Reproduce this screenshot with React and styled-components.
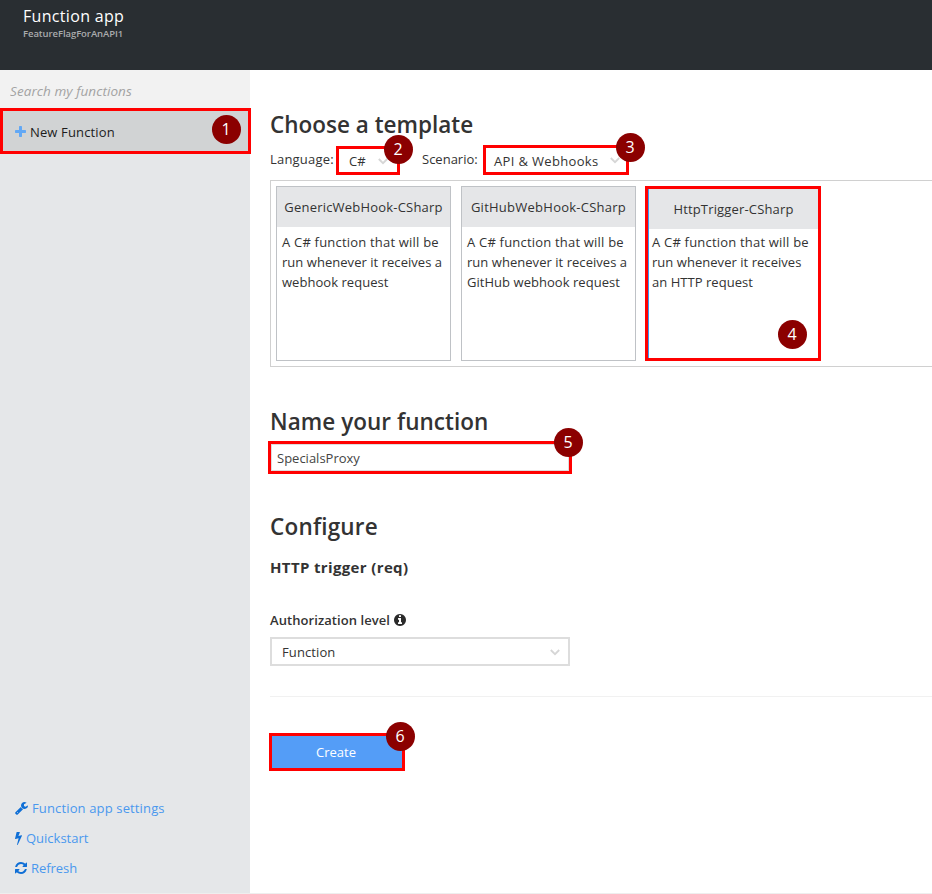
import React from 'react';
import styled, { createGlobalStyle, css } from 'styled-components';

const GlobalStyle = createGlobalStyle`
  *, *::before, *::after { box-sizing: border-box; }
  body { margin: 0; background: #fff; overflow: hidden; }
  h1, h2, h3, p { margin: 0; }
  button, input { font: inherit; }
`;

const marked = css`
  position: relative;
  border: 3px solid #ff0000;
`;

const Page = styled.div`
  display: flex;
  flex-direction: column;
  width: 932px;
  height: 894px;
  border-bottom: 1px solid #eeeeee;
  background: #fff;
  color: #333333;
  font: 13px/20px "Open Sans", "Noto Sans", sans-serif;
  white-space: nowrap;
`;

const Header = styled.header`
  flex: none;
  height: 70px;
  padding: 5px 0 0 23px;
  background: #292e32;
`;

const AppTitle = styled.h1`
  color: #fff;
  font-size: 16px;
  font-weight: 400;
  line-height: 22px;
  letter-spacing: 0.32px;
`;

const AppName = styled.div`
  color: #a9abad;
  font-size: 9.5px;
  font-weight: 600;
  line-height: 13px;
  letter-spacing: -0.07px;
`;

const Body = styled.div`
  display: flex;
  flex: 1;
  min-height: 0;
`;

const Sidebar = styled.nav`
  display: flex;
  flex-direction: column;
  flex: none;
  width: 250px;
  background: #e5e7e9;
`;

const Search = styled.input`
  height: 38px;
  padding: 4px 10px 0;
  border: 0;
  outline: 0;
  background: #f2f2f2;
  font-size: 13.5px;
  font-style: italic;
  letter-spacing: 0.08px;
  &::placeholder { color: #a3a3a3; opacity: 1; }
`;

const NewFunction = styled.div`
  ${marked}
  display: flex;
  align-items: center;
  gap: 4px;
  width: 251px;
  height: 46px;
  padding: 1px 0 0 12px;
  background: #d1d3d4;
  color: #1c1c1c;
  letter-spacing: 0.14px;
`;

const SideLinks = styled.div`
  display: flex;
  flex-direction: column;
  gap: 10px;
  margin: auto 0 15px 15px;
`;

const SideLink = styled.a`
  display: flex;
  align-items: center;
  gap: ${(p) => p.$gap}px;
  height: 20px;
  color: #4a98ee;
  letter-spacing: ${(p) => p.$track || 0}px;
`;

const Glyph = styled.svg`
  flex: none;
  width: ${(p) => p.$w}px;
  height: ${(p) => p.$h}px;
  fill: ${(p) => p.$color};
`;

const Main = styled.main`
  flex: 1;
  min-width: 0;
  padding: 38px 0 0 20px;
`;

const Heading = styled.h2`
  color: #333;
  font-size: 22.5px;
  font-weight: 600;
  line-height: 34px;
  letter-spacing: ${(p) => p.$track || 0}px;
`;

const Filters = styled.div`
  display: flex;
  align-items: flex-start;
  height: 38px;
`;

const FilterLabel = styled.span`
  padding-top: 7px;
  width: ${(p) => p.$w}px;
  letter-spacing: ${(p) => p.$track || 0}px;
`;

const FilterSelect = styled.div`
  ${marked}
  display: flex;
  align-items: center;
  justify-content: space-between;
  width: ${(p) => p.$w}px;
  height: ${(p) => p.$h}px;
  margin: ${(p) => 33 - p.$h}px ${(p) => p.$after || 0}px 0 0;
  padding: 1px ${(p) => p.$right}px 0 ${(p) => p.$left}px;
  letter-spacing: ${(p) => p.$track || 0}px;
`;

const Chevron = styled.svg`
  flex: none;
  width: 10px;
  height: 7px;
  fill: none;
  stroke: #d6d6d6;
  stroke-width: 1.8;
`;

const Templates = styled.section`
  display: flex;
  height: 187px;
  padding: 5px;
  border: 1px solid #d0d0d0;
  border-right: 0;
`;

const Card = styled.article`
  display: flex;
  flex-direction: column;
  width: 175px;
  height: 175px;
  margin-right: 10px;
  border: 1px solid #bfc2c6;
  ${(p) => p.$selected && css`
    ${marked}
    width: 176px;
    margin-left: -1px;
  `}
`;

const CardTitle = styled.h3`
  flex: none;
  height: 40px;
  background: #e5e6e8;
  font-size: 13px;
  font-weight: 400;
  line-height: 41px;
  text-align: center;
  letter-spacing: ${(p) => p.$track}px;
  ${(p) => p.$selected && css`
    border-left: 1px solid #3d96f5;
  `}
`;

const CardText = styled.p`
  flex: 1;
  padding: ${(p) => (p.$selected ? '3px 0 0 3px' : '5px 0 0 5px')};
  letter-spacing: 0.04px;
  ${(p) => p.$selected && css`border-left: 1px solid #3d96f5;`}
  &::first-line { letter-spacing: 0.2px; }
`;

const NameSection = styled.section`
  padding-top: 38px;
`;

const NameBox = styled.div`
  ${marked}
  width: 304px;
  height: 33px;
  margin: 2px 0 0 -2px;
`;

const NameInput = styled.input`
  display: block;
  width: 298px;
  height: 27px;
  padding: 1px 5px 0;
  border: 1px solid #dddddd;
  outline: 0;
  color: #444;
`;

const Configure = styled.section`
  height: 187px;
  margin-top: 36px;
  border-bottom: 1px solid #f1f1f1;
`;

const TriggerName = styled.h3`
  margin-top: 12px;
  font-size: 15px;
  font-weight: 700;
  line-height: 22px;
  letter-spacing: 0.36px;
`;

const FieldLabel = styled.div`
  display: flex;
  align-items: center;
  gap: 4px;
  margin-top: 32px;
  height: 20px;
  font-weight: 600;
  letter-spacing: 0.07px;
`;

const LevelSelect = styled.div`
  display: flex;
  align-items: center;
  justify-content: space-between;
  width: 300px;
  height: 29px;
  margin-top: 7px;
  padding: 1px 8px 0 10px;
  border: 2px solid #dddddd;
  letter-spacing: 0.1px;
`;

const CreateButton = styled.button`
  ${marked}
  display: block;
  width: 136px;
  height: 38px;
  margin: 36px 0 0 -1px;
  padding: 0 2px 0 0;
  background: #549df7;
  color: #fff;
`;

const Badge = styled.span`
  position: absolute;
  top: ${(p) => p.$top}px;
  left: ${(p) => p.$left}px;
  z-index: 1;
  display: flex;
  align-items: center;
  justify-content: center;
  width: 29.6px;
  height: 29.6px;
  padding: 0 1px 1px 0;
  border-radius: 50%;
  background: #8b0000;
  color: #fff;
  font-size: 16px;
  font-weight: 500;
  line-height: 20px;
  letter-spacing: 0;
`;

const icons = {
  plus: 'M1600 736v192q0 40-28 68t-68 28h-416v416q0 40-28 68t-68 28h-192q-40 0-68-28t-28-68v-416h-416q-40 0-68-28t-28-68v-192q0-40 28-68t68-28h416v-416q0-40 28-68t68-28h192q40 0 68 28t28 68v416h416q40 0 68 28t28 68z',
  wrench: 'M448 1472q0-26-19-45t-45-19-45 19-19 45 19 45 45 19 45-19 19-45zm644-420l-682 682q-37 37-90 37-52 0-91-37l-106-108q-38-36-38-90 0-53 38-91l681-681q39 98 114.5 173.5t173.5 114.5zm634-435q0 39-23 106-47 134-164.5 217.5t-258.5 83.5q-185 0-316.5-131.5t-131.5-316.5 131.5-316.5 316.5-131.5q58 0 121.5 16.5t107.5 46.5q16 11 16 28t-16 28l-293 169v224l193 107q5-3 79-48.5t135.5-81 70.5-35.5q15 0 23.5 10t8.5 25z',
  bolt: 'M1333 566q18 20 7 44l-540 1157q-13 25-42 25-4 0-14-2-17-5-25.5-19t-4.5-30l197-808-406 101q-4 1-12 1-18 0-31-11-18-15-13-39l201-825q4-14 16-23t28-9h328q19 0 32 12.5t13 29.5q0 8-5 18l-171 463 396-98q8-2 12-2 19 0 34 15z',
  refresh: 'M1511 928q0 5-1 7-64 268-268 434.5t-478 166.5q-146 0-282.5-55t-243.5-157l-129 129q-19 19-45 19t-45-19-19-45v-448q0-26 19-45t45-19h448q26 0 45 19t19 45-19 45l-137 137q71 66 161 102t187 36q134 0 250-65t186-179q11-17 53-117 8-23 30-23h192q13 0 22.5 9.5t9.5 22.5zm25-800v448q0 26-19 45t-45 19h-448q-26 0-45-19t-19-45 19-45l138-138q-148-137-349-137-134 0-250 65t-186 179q-11 17-53 117-8 23-30 23h-199q-13 0-22.5-9.5t-9.5-22.5v-7q65-268 270-434.5t480-166.5q146 0 284 55.5t245 156.5l130-129q19-19 45-19t45 19 19 45z',
  info: 'M1152 1376v-160q0-14-9-23t-23-9h-96v-512q0-14-9-23t-23-9h-320q-14 0-23 9t-9 23v160q0 14 9 23t23 9h96v320h-96q-14 0-23 9t-9 23v160q0 14 9 23t23 9h448q14 0 23-9t9-23zm-128-896v-160q0-14-9-23t-23-9h-192q-14 0-23 9t-9 23v160q0 14 9 23t23 9h192q14 0 23-9t9-23zm640 416q0 209-103 385.5t-279.5 279.5-385.5 103-385.5-103-279.5-279.5-103-385.5 103-385.5 279.5-279.5 385.5-103 385.5 103 279.5 279.5 103 385.5z',
};

const Icon = ({ name, box, w, h, color }) => (
  <Glyph viewBox={box} $w={w} $h={h} $color={color} aria-hidden="true">
    <path d={icons[name]} />
  </Glyph>
);

const Arrow = () => (
  <Chevron viewBox="0 0 10 7" aria-hidden="true">
    <path d="M0.8 1L5 5.2L9.2 1" />
  </Chevron>
);

export default function App() {
  return (
    <>
      <GlobalStyle />
      <Page>
        <Header>
          <AppTitle>Function app</AppTitle>
          <AppName>FeatureFlagForAnAPI1</AppName>
        </Header>
        <Body>
          <Sidebar>
            <Search placeholder="Search my functions" />
            <NewFunction>
              <Icon name="plus" box="192 128 1408 1408" w={11} h={11} color="#62a8f5" />
              New Function
              <Badge $top={3.5} $left={208.7}>1</Badge>
            </NewFunction>
            <SideLinks>
              <SideLink $gap={4} $track={0.14}>
                <Icon name="wrench" box="64 128 1664 1664" w={13} h={13} color="#0f6fd6" />
                Function app settings
              </SideLink>
              <SideLink $gap={4}>
                <Icon name="bolt" box="448 0 896 1792" w={7} h={14} color="#0f6fd6" />
                Quickstart
              </SideLink>
              <SideLink $gap={4} $track={-0.05}>
                <Icon name="refresh" box="0 0 1536 1536" w={12} h={12} color="#0f6fd6" />
                Refresh
              </SideLink>
            </SideLinks>
          </Sidebar>
          <Main>
            <Heading>Choose a template</Heading>
            <Filters>
              <FilterLabel $w={66} $track={0.2}>Language:</FilterLabel>
              <FilterSelect $w={64} $h={29} $left={10} $right={9} $after={22}>
                C#
                <Arrow />
                <Badge $top={-14.3} $left={44.7}>2</Badge>
              </FilterSelect>
              <FilterLabel $w={61}>Scenario:</FilterLabel>
              <FilterSelect $w={146} $h={30} $left={8} $right={6} $track={0.34}>
                API &amp; Webhooks
                <Arrow />
                <Badge $top={-15.5} $left={129.9}>3</Badge>
              </FilterSelect>
            </Filters>
            <Templates>
              <Card>
                <CardTitle $track={0.2}>GenericWebHook-CSharp</CardTitle>
                <CardText>A C# function that will be<br />run whenever it receives a<br />webhook request</CardText>
              </Card>
              <Card>
                <CardTitle $track={0.25}>GitHubWebHook-CSharp</CardTitle>
                <CardText>A C# function that will be<br />run whenever it receives a<br />GitHub webhook request</CardText>
              </Card>
              <Card $selected>
                <CardTitle $selected $track={0.16}>HttpTrigger-CSharp</CardTitle>
                <CardText $selected>A C# function that will be<br />run whenever it receives<br />an HTTP request</CardText>
                <Badge $top={130.5} $left={129.7}>4</Badge>
              </Card>
            </Templates>
            <NameSection>
              <Heading $track={0.04}>Name your function</Heading>
              <NameBox>
                <NameInput defaultValue="SpecialsProxy" />
                <Badge $top={-16.5} $left={282.7}>5</Badge>
              </NameBox>
            </NameSection>
            <Configure>
              <Heading $track={0.2}>Configure</Heading>
              <TriggerName>HTTP trigger (req)</TriggerName>
              <FieldLabel>
                Authorization level
                <Icon name="info" box="128 128 1536 1536" w={12} h={12} color="#2b2b2b" />
              </FieldLabel>
              <LevelSelect>
                Function
                <Arrow />
              </LevelSelect>
            </Configure>
            <CreateButton>
              Create
              <Badge $top={-14.3} $left={113.8}>6</Badge>
            </CreateButton>
          </Main>
        </Body>
      </Page>
    </>
  );
}
